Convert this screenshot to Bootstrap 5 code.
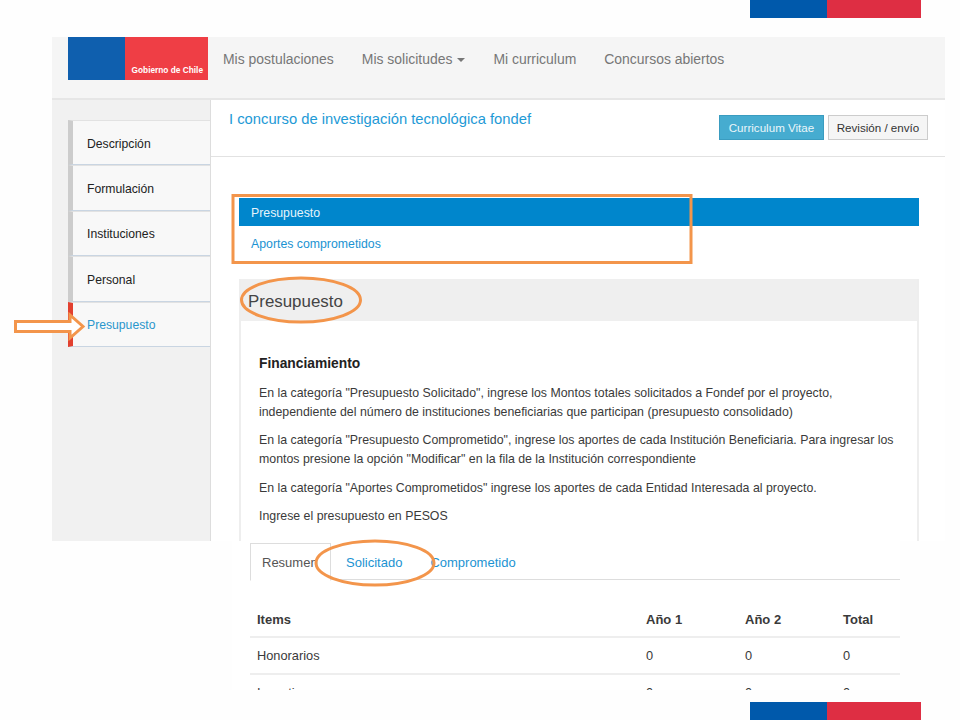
<!DOCTYPE html>
<html lang="es">
<head>
<meta charset="utf-8">
<title>Presupuesto</title>
<link href="https://cdn.jsdelivr.net/npm/bootstrap@5.3.0/dist/css/bootstrap.min.css" rel="stylesheet">
<style>
html,body{height:720px;overflow:hidden}
body{background:#fefefe;font-family:"Liberation Sans",Arial,sans-serif;font-size:12px;color:#333;position:relative}
.flagbar{display:flex;width:171px;height:18px;margin-left:750px}
.flagbar i{display:block}
.flag-b{width:77px;background:#0059ab}
.flag-r{flex:1;background:#de2e43}
.shot-top{margin:19px 0 0 52px;width:893px;height:504px;background:#f1f1f1;overflow:hidden}
.topnav{height:63px;background:#f5f5f5;border-bottom:2px solid #e6e6e6;padding-left:16px}
.logo{width:140px;height:43px;display:flex;flex:none}
.logo-b{width:57px;background:#0f5fae}
.logo-r{flex:1;background:#ef3e45;color:#fff;font-size:8.3px;font-weight:700;text-align:right;padding:27px 5px 0 0;line-height:12px;white-space:nowrap}
.topnav .nav-link{color:#777;font-size:13.95px;padding:0 14px;line-height:45px}
.topnav .nav{margin-left:1px}
.caret-d{display:inline-block;border-top:4px solid #777;border-left:4px solid transparent;border-right:4px solid transparent;margin-left:5px;vertical-align:middle}
.bodyrow{height:441px}
.sidecol{width:158px;padding:20px 0 0 16px;flex:none}
.sideitem{display:block;height:45.4px;border-left:5px solid #ccc;border-bottom:1px solid #c9d5e2;border-top:1px solid #e2e2e2;background:#f8f8f8;padding:15.500px 0 0 14px;color:#222;line-height:14px;font-size:12.2px;text-decoration:none;margin-bottom:0}
.sideitem.on{border-left-color:#e2402f;color:#2a96cc}
.mainp{flex:1;background:#fff;border-left:1px solid #ddd;overflow:hidden}
.mainhead{height:57px;border-bottom:1px solid #e2e2e2;padding:10px 17px 0 18px}
.mainhead h1{font-size:14.77px;font-weight:400;color:#1e9ad6;margin:0;line-height:19px;white-space:nowrap}
.btn-cv,.btn-rev{font-size:11.6px;border-radius:0;padding:0;height:25px;line-height:23px;margin-top:5px;white-space:nowrap}
.btn-cv{background:#46acd0;border:1px solid #3a9cc0;color:#eaf6fa;width:105px}
.btn-rev{background:#f5f5f5;border:1px solid #ccc;color:#333;width:100px;margin-left:4px}
.subtabs{margin:41px 26px 0 28px}
.subtabs a{display:block;height:28px;line-height:30px;padding:0 12px;font-size:12.3px;text-decoration:none;color:#1b93d2;border-radius:0}
.subtabs a.on{background:#0086cc;color:#e6f4fb}
.subtabs a+a{margin-top:3px}
.panelx{margin:22px 26px 0 28px;border-right:2px solid #eee;border-left:2px solid #eee;border-radius:0;border-top:0;border-bottom:0;height:262px}
.panelx .card-header{height:42px;background:#efefef;border:0;border-radius:0;font-size:16.9px;color:#444;padding:12px 7px 0;line-height:22px}
.panelx .card-body{padding:33px 18px 0;font-size:12.35px;line-height:19px;color:#3a3a3a}
.panelx h2{font-size:13.8px;font-weight:700;color:#222;margin:0 0 10.500px;line-height:19px}
.panelx p{margin:0 0 9.500px;white-space:nowrap}
.shot-bot{margin-left:232px;width:668px;height:149px;padding-left:18px;overflow:hidden;background:#fff}
.tabsx{border-bottom:1px solid #ddd;margin-top:2px;height:37px;flex-wrap:nowrap}
.tabsx .nav-link{font-size:13px;color:#1b93d2;padding:0 12px;line-height:38px;height:38px;border-radius:0;border:1px solid transparent}
.tabsx .nav-link.active{color:#555;border-color:#ddd #ddd transparent;background:#fff;width:81px;padding:0 0 0 11px;overflow:hidden;white-space:nowrap}
.tabsx .lnk-two{padding-left:14px;padding-right:14px}
.tabsx .lnk-three{padding-left:12px}
.tablex{margin:20px 0 0;font-size:12.8px;color:#3a3a3a;table-layout:fixed;width:100%}
.tablex th,.tablex td{padding:0 8px;height:37px;border-bottom:2px solid #eee;vertical-align:middle}
.tablex th{font-weight:700;font-size:13px;padding-top:3px}
.tablex th:first-child,.tablex td:first-child,.tablex th:last-child,.tablex td:last-child{padding-left:7px}
.c1{width:388px}.c2,.c3{width:99px}
.overlay{position:absolute;left:0;top:0;width:960px;height:720px;pointer-events:none}
.botflag{position:absolute;left:0;top:702px}
</style>
</head>
<body>
<div class="flagbar"><i class="flag-b"></i><i class="flag-r"></i></div>

<div class="shot-top">
  <div class="topnav d-flex">
    <div class="logo"><div class="logo-b"></div><div class="logo-r">Gobierno de Chile</div></div>
    <ul class="nav">
      <li class="nav-item"><a class="nav-link" href="#">Mis postulaciones</a></li>
      <li class="nav-item"><a class="nav-link" href="#">Mis solicitudes<span class="caret-d"></span></a></li>
      <li class="nav-item"><a class="nav-link" href="#">Mi curriculum</a></li>
      <li class="nav-item"><a class="nav-link" href="#">Concursos abiertos</a></li>
    </ul>
  </div>
  <div class="bodyrow d-flex">
    <div class="sidecol">
      <a class="sideitem" href="#">Descripción</a>
      <a class="sideitem" href="#">Formulación</a>
      <a class="sideitem" href="#">Instituciones</a>
      <a class="sideitem" href="#">Personal</a>
      <a class="sideitem on" href="#">Presupuesto</a>
    </div>
    <div class="mainp">
      <div class="mainhead d-flex justify-content-between align-items-start">
        <h1>I concurso de investigación tecnológica fondef</h1>
        <div class="d-flex">
          <button class="btn btn-cv" type="button">Curriculum Vitae</button>
          <button class="btn btn-rev" type="button">Revisión / envío</button>
        </div>
      </div>
      <div class="subtabs">
        <a class="on" href="#">Presupuesto</a>
        <a href="#">Aportes comprometidos</a>
      </div>
      <div class="card panelx">
        <div class="card-header">Presupuesto</div>
        <div class="card-body">
          <h2>Financiamiento</h2>
          <p>En la categoría "Presupuesto Solicitado", ingrese los Montos totales solicitados a Fondef por el proyecto,<br>independiente del número de instituciones beneficiarias que participan (presupuesto consolidado)</p>
          <p>En la categoría "Presupuesto Comprometido", ingrese los aportes de cada Institución Beneficiaria. Para ingresar los<br>montos presione la opción "Modificar" en la fila de la Institución correspondiente</p>
          <p>En la categoría "Aportes Comprometidos" ingrese los aportes de cada Entidad Interesada al proyecto.</p>
          <p>Ingrese el presupuesto en PESOS</p>
        </div>
      </div>
    </div>
  </div>
</div>

<div class="shot-bot">
  <ul class="nav nav-tabs tabsx">
    <li class="nav-item"><a class="nav-link active" href="#">Resumen</a></li>
    <li class="nav-item"><a class="nav-link lnk-two" href="#">Solicitado</a></li>
    <li class="nav-item"><a class="nav-link lnk-three" href="#">Comprometido</a></li>
  </ul>
  <table class="tablex">
    <thead><tr><th class="c1">Items</th><th class="c2">Año 1</th><th class="c3">Año 2</th><th>Total</th></tr></thead>
    <tbody>
      <tr><td>Honorarios</td><td>0</td><td>0</td><td>0</td></tr>
      <tr><td>Incentivos</td><td>0</td><td>0</td><td>0</td></tr>
    </tbody>
  </table>
</div>

<div class="flagbar botflag"><i class="flag-b"></i><i class="flag-r"></i></div>

<svg class="overlay" viewBox="0 0 960 720" aria-hidden="true">
  <g fill="none" stroke="#f3954b" stroke-width="3">
    <rect x="233" y="195.500" width="458" height="67"/>
    <ellipse cx="301" cy="300" rx="59.500" ry="22"/>
    <ellipse cx="375" cy="563" rx="59" ry="22"/>
    <path d="M15.500 321.500H70V315L83 326.500L70 338V331.500H15.500Z" fill="#fff"/>
  </g>
</svg>
</body>
</html>
